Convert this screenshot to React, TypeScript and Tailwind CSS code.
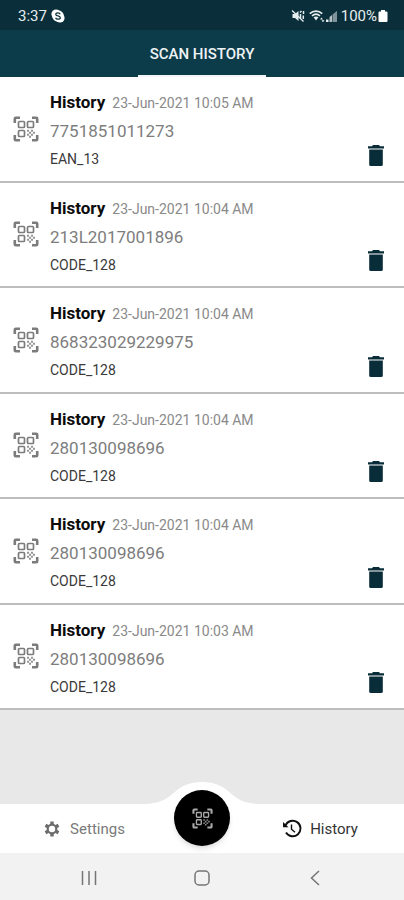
import React from "react";

type HistoryItem = {
  date: string;
  code: string;
  format: string;
};

const items: HistoryItem[] = [
  { date: "23-Jun-2021 10:05 AM", code: "7751851011273", format: "EAN_13" },
  { date: "23-Jun-2021 10:04 AM", code: "213L2017001896", format: "CODE_128" },
  { date: "23-Jun-2021 10:04 AM", code: "868323029229975", format: "CODE_128" },
  { date: "23-Jun-2021 10:04 AM", code: "280130098696", format: "CODE_128" },
  { date: "23-Jun-2021 10:04 AM", code: "280130098696", format: "CODE_128" },
  { date: "23-Jun-2021 10:03 AM", code: "280130098696", format: "CODE_128" },
];

function ScanIcon({ className }: { className: string }) {
  return (
    <svg viewBox="0 0 26 26" className={className} fill="none" stroke="currentColor">
      <path
        d="M1.800 7V2.800q0-1 1-1H7M19 1.800h4.200q1 0 1 1V7M1.800 19v4.200q0 1 1 1H7M24.200 19v4.200q0 1-1 1H19"
        strokeWidth="2.600"
      />
      <rect x="5.500" y="5.500" width="6" height="6" rx="1" strokeWidth="1.700" />
      <rect x="14.500" y="5.500" width="6" height="6" rx="1" strokeWidth="1.700" />
      <rect x="5.500" y="14.500" width="6" height="6" rx="1" strokeWidth="1.700" />
      <path
        d="M14 13.800h2v2h-2zM18 13.800h2v2h-2zM16 15.800h2v2h-2zM20 15.800h2v2h-2zM14 17.800h2v2h-2zM18 17.800h2v2h-2zM16 19.800h2v2h-2z"
        fill="currentColor"
        stroke="none"
        opacity="0.8"
      />
    </svg>
  );
}

function TrashIcon({ className }: { className: string }) {
  return (
    <svg viewBox="0 0 16 21" className={className} fill="currentColor">
      <path d="M5 0h6l1 1.300h4v2.200H0V1.300h4z" />
      <path d="M1.200 4.500h13.600V19.500q0 1.500-1.500 1.500H2.700q-1.500 0-1.500-1.500z" />
    </svg>
  );
}

function GearIcon({ className }: { className: string }) {
  return (
    <svg viewBox="0 0 18 18" className={className} fill="none" stroke="currentColor">
      <circle cx="9" cy="9" r="4.300" strokeWidth="2.200" />
      <path
        d="M9 1.500v3M9 13.500v3M2.500 5.250l2.600 1.500M12.900 11.250l2.600 1.500M2.500 12.750l2.600-1.500M12.900 6.750l2.600-1.500"
        strokeWidth="3.400"
      />
    </svg>
  );
}

function StatusBar() {
  return (
    <div className="flex h-[30px] items-center justify-between bg-[#0a2f3a] pt-0.5 pl-[18px] pr-4 text-[15px] leading-5 text-[#e6edef]">
      <div className="flex items-center gap-1">
        <span>3:37</span>
        <svg viewBox="0 0 14 14" className="size-[14px]">
          <circle cx="5" cy="5" r="4.6" fill="#fff" />
          <circle cx="9" cy="9" r="4.6" fill="#fff" />
          <circle cx="7" cy="7" r="5.8" fill="#fff" />
          <path
            d="M9.200 5.200C8.800 4.200 7.900 3.900 7 3.900c-1.200 0-2.200.5-2.200 1.500C4.800 7.500 9.300 6.400 9.300 8.700c0 1-1 1.500-2.300 1.500-1.100 0-2.100-.5-2.400-1.500"
            fill="none"
            stroke="#0a2f3a"
            strokeWidth="1.300"
          />
        </svg>
      </div>
      <div className="flex items-center">
        <svg viewBox="0 0 14 14" className="size-[14px]" fill="none" stroke="#e6edef">
          <path d="M1.500 5h2.500l3.500-3v10L4 9H1.500z" fill="#e6edef" stroke="none" />
          <path d="M1 1.500l11.500 11" strokeWidth="1.300" />
          <path d="M9 3.500l1.500-1.500M12.500 2v3M9.500 5v4M12.300 6.500v3.500" strokeWidth="1.500" />
        </svg>
        <svg viewBox="0 0 16 14" className="ml-1 h-[14px] w-4" fill="none" stroke="#e6edef">
          <path d="M.8 4.700c3.600-3.400 8.800-3.400 12.400 0" strokeWidth="1.800" />
          <path d="M3 6.900c2.400-2.100 5.600-2.100 8 0" strokeWidth="1.500" />
          <path d="M4.600 8.200L7 11.400l2.400-3.200c-1.400-1.100-3.400-1.100-4.800 0z" fill="#e6edef" stroke="none" />
          <path d="M11 10.500l1.500-2 1.500 2zM12.500 11.300h3L14 13.300z" fill="#e6edef" stroke="none" />
        </svg>
        <svg viewBox="0 0 12 14" className="h-[14px] w-3">
          <path d="M1 10.500h2.500V13H1z" fill="#e6edef" />
          <path d="M4.500 8L7 6v7H4.500z" fill="#b4c0c4" />
          <path d="M7.500 5.500L12 2v11H7.500z" fill="#80939a" />
        </svg>
        <span className="ml-1">100%</span>
        <svg viewBox="0 0 10 14" className="ml-px h-[14px] w-[10px]" fill="#fff">
          <path d="M3 1h4v1.500h1.500q1 0 1 1V12q0 1-1 1h-7q-1 0-1-1V3.500q0-1 1-1H3z" />
        </svg>
      </div>
    </div>
  );
}

function HistoryRow({ item }: { item: HistoryItem }) {
  return (
    <li className="flex items-center border-b-2 border-[#bdbdbd] bg-white pl-[13px] pr-5">
      <ScanIcon className="size-[26px] shrink-0 text-[#7c7c7c]" />
      <div className="ml-[11px] flex-1 pt-1">
        <p className="flex items-baseline gap-[7px] leading-7">
          <span className="text-[17px] font-bold text-[#0c0c0c]">History</span>
          <span className="text-[14px] text-[#8a8a8a]">{item.date}</span>
        </p>
        <p className="text-[17px] leading-7 text-[#7d7d7d]">{item.code}</p>
        <p className="text-[14px] leading-7 text-[#3a3a3a]">{item.format}</p>
      </div>
      <button type="button" aria-label="Delete" className="mb-[15px] self-end">
        <TrashIcon className="h-[21px] w-4 text-[#082c38]" />
      </button>
    </li>
  );
}

function BottomBar() {
  return (
    <nav className="relative grid h-[49px] grid-cols-[1fr_56px_1fr] bg-white">
      <svg
        viewBox="0 0 112 22"
        className="absolute bottom-full left-1/2 h-[22px] w-28 -translate-x-1/2"
        fill="#fff"
      >
        <path d="M0 22C20 21 24 13 34 6 40 2 48 0 56 0s16 2 22 6c10 7 14 15 34 16z" />
      </svg>
      <a href="#settings" className="flex items-center justify-center gap-[9px] pr-1.5 text-[15px] text-[#7a7a7a]">
        <GearIcon className="size-[18px] text-[#6c6c6c]" />
        <span className="pt-0.5">Settings</span>
      </a>
      <button
        type="button"
        aria-label="Scan"
        className="relative -mt-[14px] flex size-14 items-center justify-center rounded-full bg-black shadow-md"
      >
        <ScanIcon className="size-[21px] text-[#a8a8a8]" />
      </button>
      <a href="#history" className="flex items-center justify-center gap-2 pl-1.5 text-[15px] text-[#333]">
        <svg viewBox="0 0 20 20" className="size-5" fill="none" stroke="#111">
          <path d="M3.500 6.500A7.800 7.800 0 1 1 4 13.500" strokeWidth="1.900" />
          <path d="M1 3v5.200h5.500z" fill="#111" stroke="none" />
          <path d="M9.500 5.500v4.800l3.500 3" strokeWidth="1.400" />
        </svg>
        <span className="pt-0.5">History</span>
      </a>
    </nav>
  );
}

function SystemNav() {
  return (
    <div className="flex h-[47px] items-center justify-center gap-[97px] bg-[#f2f2f2] pt-0.5 text-[#757575]">
      <button type="button" aria-label="Recent apps">
        <svg viewBox="0 0 16 16" className="size-4" stroke="currentColor" strokeWidth="1.500">
          <path d="M1.500 1v14M8 1v14M14.500 1v14" />
        </svg>
      </button>
      <button type="button" aria-label="Home">
        <svg viewBox="0 0 16 16" className="size-4" fill="none" stroke="currentColor" strokeWidth="1.500">
          <rect x="1" y="1" width="14" height="14" rx="4" />
        </svg>
      </button>
      <button type="button" aria-label="Back">
        <svg viewBox="0 0 16 16" className="size-4" fill="none" stroke="currentColor" strokeWidth="1.500">
          <path d="M12 1L4.500 8l7.500 7" />
        </svg>
      </button>
    </div>
  );
}

export default function App() {
  return (
    <div className="flex min-h-screen flex-col bg-[#e8e8e8] font-['Roboto',sans-serif]">
      <StatusBar />
      <header className="flex h-[47px] justify-center bg-[#0c3c49]">
        <h1 className="flex w-32 items-center justify-center border-b-2 border-[#f4f4f8] pt-1 text-[15px] font-medium whitespace-nowrap text-[#eef3f5]">
          SCAN HISTORY
        </h1>
      </header>
      <main className="flex-1">
        <ul className="grid min-h-[633px] auto-rows-fr">
          {items.map((item, index) => (
            <HistoryRow key={index} item={item} />
          ))}
        </ul>
      </main>
      <BottomBar />
      <SystemNav />
    </div>
  );
}
